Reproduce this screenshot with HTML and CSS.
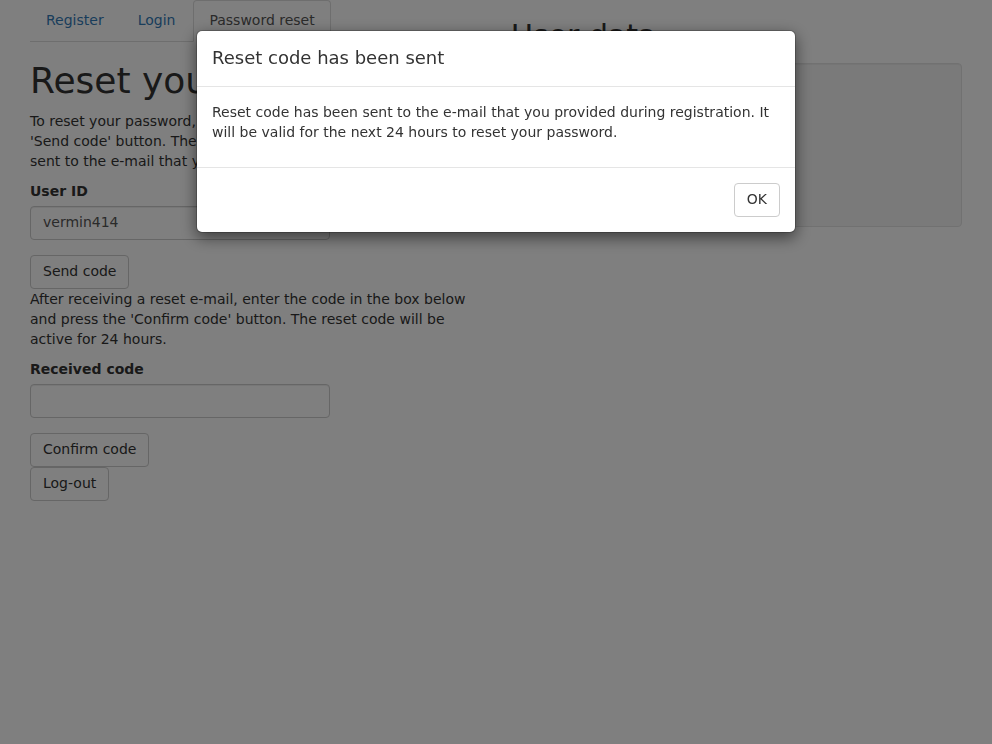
FILE: index.html
```html
<!DOCTYPE html>
<html>
<head>
<meta charset="utf-8">
<title>Password reset</title>
<link rel="stylesheet" href="styles.css">
</head>
<body>
<div class="page">
  <div class="col">
    <ul class="tabs">
      <li><a class="tab-link">Register</a></li>
      <li><a class="tab-link">Login</a></li>
      <li class="active"><a class="tab-link">Password reset</a></li>
    </ul>
    <div class="tab-content">
      <h1 class="title">Reset your password</h1>
      <p class="text">To reset your password, enter your user ID below and press the 'Send code' button. The reset code for your account will then be sent to the e-mail that you provided during registration.</p>
      <div class="form-group">
        <label class="label">User ID</label>
        <input class="form-control" type="text" value="vermin414">
      </div>
      <button class="btn">Send code</button>
      <p class="text">After receiving a reset e-mail, enter the code in the box below and press the 'Confirm code' button. The reset code will be active for 24 hours.</p>
      <div class="form-group">
        <label class="label">Received code</label>
        <input class="form-control" type="text" value="">
      </div>
      <div class="btn-stack">
        <button class="btn">Confirm code</button>
        <button class="btn">Log-out</button>
      </div>
    </div>
  </div>
  <div class="col">
    <h2 class="subtitle">User data</h2>
    <div class="well"><div class="well-inner"></div></div>
  </div>
</div>
<div class="backdrop"></div>
<div class="modal">
  <div class="modal-dialog">
    <div class="modal-header"><h4 class="modal-title">Reset code has been sent</h4></div>
    <div class="modal-body"><p class="modal-text">Reset code has been sent to the e-mail that you provided during registration. It will be valid for the next 24 hours to reset your password.</p></div>
    <div class="modal-footer"><button class="btn">OK</button></div>
  </div>
</div>
</body>
</html>
```
FILE: styles.css
```css
* { box-sizing: border-box; }
html, body { margin: 0; padding: 0; }
body {
  font-family: "DejaVu Sans", sans-serif;
  font-size: 14px;
  line-height: 20px;
  color: #333;
  background: #fff;
  width: 992px;
  height: 744px;
  overflow: hidden;
}
.page { display: flex; padding: 0 15px; }
.col { width: 50%; padding: 0 15px; }

.tabs {
  list-style: none;
  margin: 0;
  padding: 0;
  display: flex;
  border-bottom: 1px solid #ddd;
}
.tabs li { margin-bottom: -1px; margin-right: 2px; }
.tab-link {
  display: block;
  padding: 9px 15px 11px;
  line-height: 20px;
  border: 1px solid transparent;
  border-radius: 4px 4px 0 0;
  color: #337ab7;
  text-decoration: none;
}
.tabs li.active .tab-link {
  color: #555;
  background: #fff;
  border-color: #ddd #ddd transparent;
}

.title {
  font-size: 36px;
  font-weight: 500;
  line-height: 1.1;
  margin: 19px 0 10px;
  white-space: nowrap;
}
.subtitle {
  font-size: 30px;
  font-weight: 500;
  line-height: 1.1;
  margin: 19px 0 11px;
}
.text { margin: 0 0 10px; }
.form-group { width: 300px; margin-bottom: 15px; }
.label {
  display: inline-block;
  font-weight: bold;
  margin-bottom: 5px;
}
.form-control {
  display: block;
  width: 100%;
  height: 34px;
  padding: 5px 12px 7px;
  font-family: inherit;
  font-size: 14px;
  line-height: 20px;
  color: #555;
  background: #fff;
  border: 1px solid #ccc;
  border-radius: 4px;
  box-shadow: inset 0 1px 1px rgba(0,0,0,.075);
}
.btn {
  display: inline-block;
  padding: 5px 12px 7px;
  font-family: inherit;
  font-size: 14px;
  line-height: 20px;
  color: #333;
  background: #fff;
  border: 1px solid #ccc;
  border-radius: 4px;
  margin: 0;
  height: 34px;
}
.btn-stack { display: flex; flex-direction: column; align-items: flex-start; }

.well {
  min-height: 20px;
  padding: 19px;
  margin-bottom: 20px;
  background: #f5f5f5;
  border: 1px solid #e3e3e3;
  border-radius: 4px;
  box-shadow: inset 0 1px 1px rgba(0,0,0,.05);
}
.well-inner { height: 124px; }

.backdrop {
  position: fixed;
  inset: 0;
  background: rgba(0,0,0,.5);
}
.modal {
  position: fixed;
  inset: 0;
}
.modal-dialog {
  width: 600px;
  margin: 30px auto;
  background: #fff;
  border: 1px solid rgba(0,0,0,.2);
  border-radius: 6px;
  box-shadow: 0 5px 15px rgba(0,0,0,.5);
  background-clip: padding-box;
}
.modal-header { padding: 14px 15px 15px; border-bottom: 1px solid #e5e5e5; }
.modal-title { margin: 0; font-size: 18px; font-weight: 500; line-height: 1.42857143; }
.modal-body { padding: 15px; }
.modal-text { margin: 0 0 10px; }
.modal-footer { padding: 15px; border-top: 1px solid #e5e5e5; display: flex; justify-content: flex-end; }
```
